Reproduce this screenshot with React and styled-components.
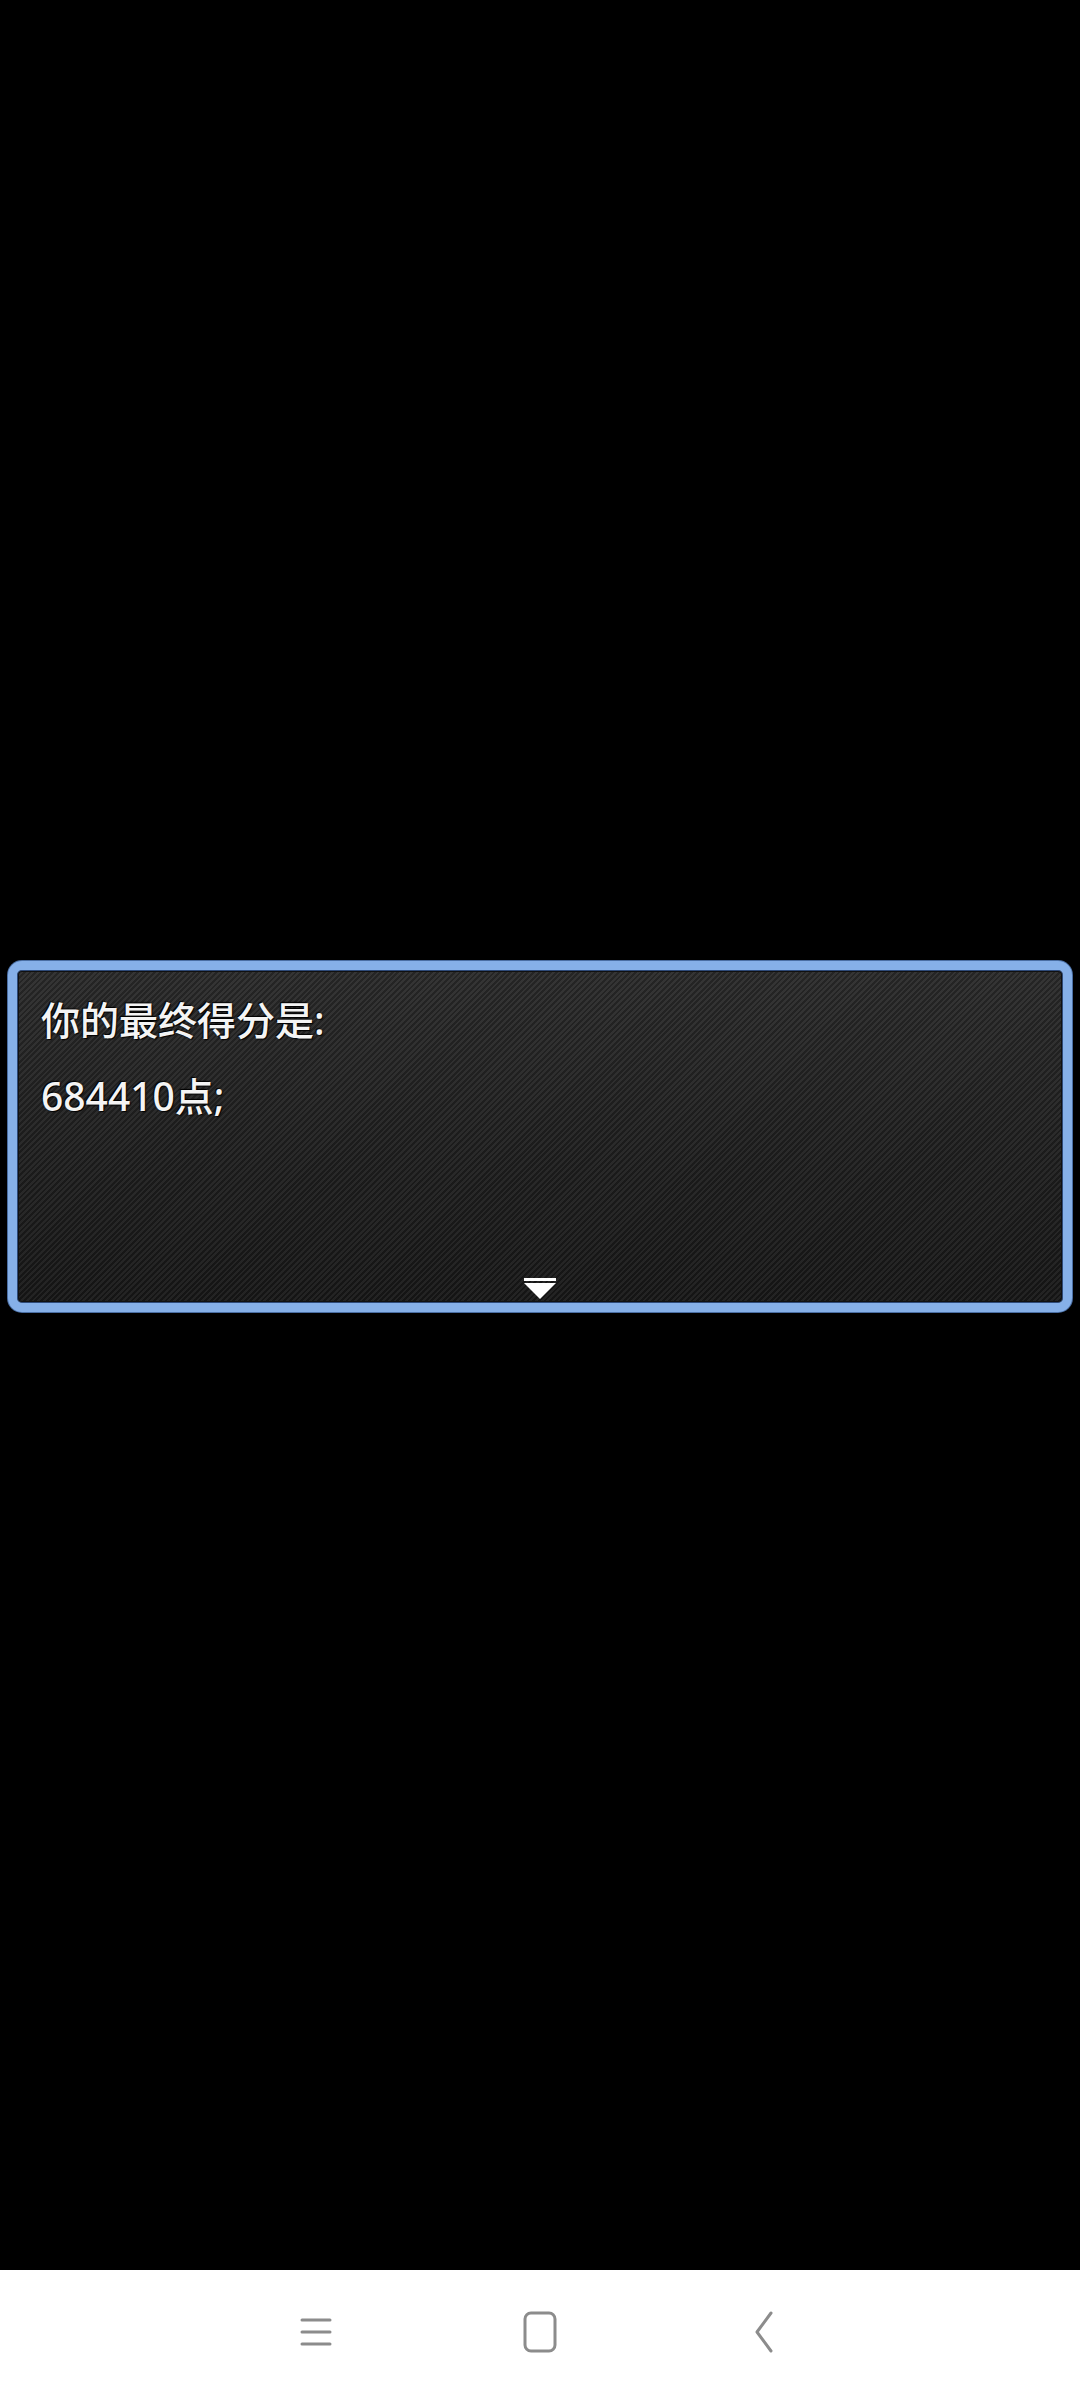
import React from "react";
import styled, { createGlobalStyle } from "styled-components";

const GlobalStyle = createGlobalStyle`
  html, body {
    margin: 0;
    padding: 0;
    background: #000;
  }
  body {
    font-family: "Noto Sans", "Noto Sans CJK SC", sans-serif;
  }
`;

const Screen = styled.div`
  width: 1080px;
  height: 2400px;
  display: flex;
  flex-direction: column;
  background: #000;
`;

const GameArea = styled.div`
  flex: 1;
  padding: 961px 8px 0;
`;

const MessageBox = styled.div`
  position: relative;
  height: 351px;
  box-sizing: border-box;
  border: 9px solid #86b0e8;
  border-radius: 14px;
  box-shadow: 0 0 0 1px #4a6ea3, inset 0 0 0 1px #2e4a78, inset 0 0 0 2px #111;
  background-color: #1d1d1d;
  background-image: repeating-linear-gradient(
      135deg,
      rgba(255, 255, 255, 0.05) 0px,
      rgba(255, 255, 255, 0.05) 2px,
      rgba(0, 0, 0, 0.12) 2px,
      rgba(0, 0, 0, 0.12) 4px
    ),
    linear-gradient(180deg, #2a2a2a 0%, #202020 50%, #171717 100%);
  padding: 12px 24px;
  overflow: hidden;
`;

const Line = styled.div`
  color: #f4f4f4;
  font-size: 39px;
  font-weight: 500;
  line-height: 76px;
  text-shadow: 0 0 2px #000, 1px 1px 1px #000, -1px -1px 1px #000, 0 0 1px #ddd;
  white-space: nowrap;
`;

const NextArrow = styled.div`
  position: absolute;
  left: 50%;
  bottom: 4px;
  transform: translateX(-50%);
  display: flex;
  flex-direction: column;
  align-items: center;
  gap: 2px;
`;

const ArrowBar = styled.div`
  width: 32px;
  height: 3px;
  background: #fff;
`;

const ArrowHead = styled.div`
  width: 0;
  height: 0;
  border-left: 16px solid transparent;
  border-right: 16px solid transparent;
  border-top: 16px solid #fff;
`;

const NavBar = styled.div`
  height: 130px;
  background: #fff;
  display: flex;
  align-items: center;
  justify-content: center;
  padding-bottom: 6px;
  box-sizing: border-box;
`;

const NavButton = styled.div`
  width: 224px;
  display: flex;
  justify-content: center;
  align-items: center;
`;

const MenuIcon = () => (
  <svg width="32" height="32" viewBox="0 0 32 32">
    <g stroke="#8c8c8c" strokeWidth="3" strokeLinecap="round">
      <line x1="2" y1="4" x2="30" y2="4" />
      <line x1="2" y1="16" x2="30" y2="16" />
      <line x1="2" y1="28" x2="30" y2="28" />
    </g>
  </svg>
);

const HomeIcon = () => (
  <svg width="34" height="42" viewBox="0 0 34 42">
    <rect x="2" y="2" width="30" height="38" rx="6" fill="none" stroke="#8c8c8c" strokeWidth="3" />
  </svg>
);

const BackIcon = () => (
  <svg width="20" height="42" viewBox="0 0 20 42">
    <polyline points="17,2 3,21 17,40" fill="none" stroke="#8c8c8c" strokeWidth="3" strokeLinecap="round" strokeLinejoin="round" />
  </svg>
);

export default function App() {
  return (
    <>
      <GlobalStyle />
      <Screen>
        <GameArea>
          <MessageBox>
            <Line>你的最终得分是:</Line>
            <Line>684410点;</Line>
            <NextArrow>
              <ArrowBar />
              <ArrowHead />
            </NextArrow>
          </MessageBox>
        </GameArea>
        <NavBar>
          <NavButton><MenuIcon /></NavButton>
          <NavButton><HomeIcon /></NavButton>
          <NavButton><BackIcon /></NavButton>
        </NavBar>
      </Screen>
    </>
  );
}
